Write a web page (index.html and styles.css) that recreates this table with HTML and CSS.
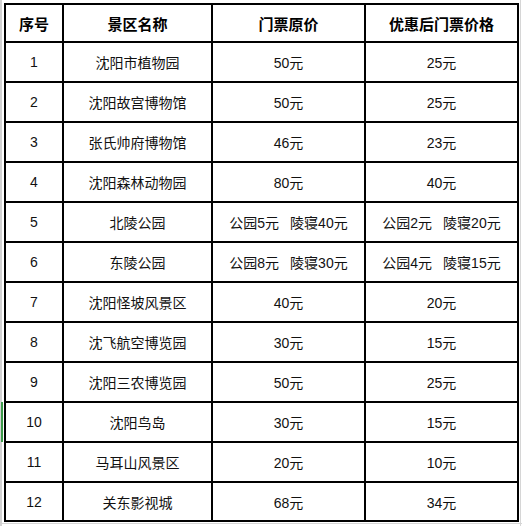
FILE: index.html
```html
<!DOCTYPE html>
<html lang="zh-CN">
<head>
<meta charset="utf-8">
<title>景区门票价格</title>
<link rel="stylesheet" href="styles.css">
</head>
<body>
<div class="sheet">
  <table class="prices">
    <colgroup>
      <col class="c-no">
      <col class="c-name">
      <col class="c-price">
      <col class="c-price">
    </colgroup>
    <thead>
      <tr><th>序号</th><th>景区名称</th><th>门票原价</th><th>优惠后门票价格</th></tr>
    </thead>
    <tbody>
      <tr><td>1</td><td>沈阳市植物园</td><td>50元</td><td>25元</td></tr>
      <tr><td>2</td><td>沈阳故宫博物馆</td><td>50元</td><td>25元</td></tr>
      <tr><td>3</td><td>张氏帅府博物馆</td><td>46元</td><td>23元</td></tr>
      <tr><td>4</td><td>沈阳森林动物园</td><td>80元</td><td>40元</td></tr>
      <tr><td>5</td><td>北陵公园</td><td>公园5元<span class="gap">陵寝40元</span></td><td>公园2元<span class="gap">陵寝20元</span></td></tr>
      <tr><td>6</td><td>东陵公园</td><td>公园8元<span class="gap">陵寝30元</span></td><td>公园4元<span class="gap">陵寝15元</span></td></tr>
      <tr><td>7</td><td>沈阳怪坡风景区</td><td>40元</td><td>20元</td></tr>
      <tr><td>8</td><td>沈飞航空博览园</td><td>30元</td><td>15元</td></tr>
      <tr><td>9</td><td>沈阳三农博览园</td><td>50元</td><td>25元</td></tr>
      <tr><td>10</td><td>沈阳鸟岛</td><td>30元</td><td>15元</td></tr>
      <tr><td>11</td><td>马耳山风景区</td><td>20元</td><td>10元</td></tr>
      <tr class="last"><td>12</td><td>关东影视城</td><td>68元</td><td>34元</td></tr>
    </tbody>
  </table>
</div>
</body>
</html>
```

FILE: styles.css
```css
* { box-sizing: border-box; }

html, body {
  margin: 0;
  padding: 0;
  background: #ffffff;
}

.sheet {
  width: 522px;
  height: 526px;
  padding: 3px 0 0 4px;
  overflow: hidden;
  background:
    linear-gradient(#3c9a4a, #3c9a4a) 1px 402px / 2px 40px no-repeat,
    linear-gradient(#d2d2d2, #d2d2d2) 0 0 / 2px 100% no-repeat,
    linear-gradient(#d6d6d6, #d6d6d6) 520px 0 / 1px 100% no-repeat,
    linear-gradient(#d6d6d6, #d6d6d6) 0 523px / 100% 1px no-repeat,
    #ffffff;
  font-family: "Liberation Sans", "Noto Sans CJK SC", sans-serif;
  color: #111;
}

.prices {
  width: 515px;
  table-layout: fixed;
  border-collapse: separate;
  border-spacing: 0;
  border-left: 2px solid #000;
  border-top: 2px solid #000;
}

.c-no { width: 58px; }
.c-name { width: 149px; }
.c-price { width: 153px; }

.prices th,
.prices td {
  border-right: 2px solid #000;
  border-bottom: 2px solid #000;
  padding: 0;
  text-align: center;
  vertical-align: middle;
  white-space: nowrap;
}

.prices th {
  height: 38px;
  font-size: 15px;
  font-weight: bold;
  color: #000;
}

.prices td {
  height: 40px;
  font-size: 14px;
  font-weight: normal;
}

.prices tr.last td {
  height: 39px;
}

.gap {
  margin-left: 11px;
}
```
